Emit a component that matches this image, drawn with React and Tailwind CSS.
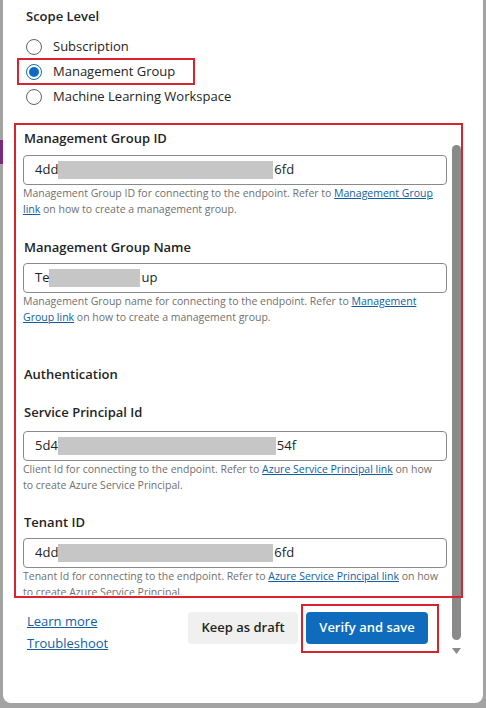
import React from "react";

const font = { fontFamily: '"Open Sans", "Noto Sans", sans-serif' };

function Radio({ label, checked }) {
  return (
    <div className="flex items-center gap-[11px] h-[25px]">
      {checked ? (
        <span className="w-[16px] h-[16px] rounded-full border border-[#0f6cbd] flex items-center justify-center">
          <span className="w-[10px] h-[10px] rounded-full bg-[#0f6cbd]" />
        </span>
      ) : (
        <span className="w-[16px] h-[16px] rounded-full border border-[#616161]" />
      )}
      <span className="text-[13px] text-[#242424]">{label}</span>
    </div>
  );
}

function Redacted({ pre, w, post }) {
  return (
    <div className="flex items-center h-full pl-[11px] text-[13px] text-[#242424]">
      <span>{pre}</span>
      <span className="h-[18px] bg-[#c6c6c6]" style={{ width: w }} />
      <span className="ml-[1px]">{post}</span>
    </div>
  );
}

function Field({ label, pre, w, post, children, mt, gap }) {
  return (
    <div className={mt}>
      <div className="text-[13px] font-semibold text-[#242424] leading-[20px] pl-[1px]">{label}</div>
      <div className={"h-[30px] w-[424px] border border-[#8a8a8a] rounded-[4px] " + gap}>
        <Redacted pre={pre} w={w} post={post} />
      </div>
      <div className="text-[10.5px] leading-[16px] text-[#707070] w-[420px]">{children}</div>
    </div>
  );
}

const A = ({ children }) => (
  <span className="text-[#115ea3] underline">{children}</span>
);

export default function App() {
  return (
    <div className="w-[486px] h-[708px] bg-[#a3a3a3] relative overflow-hidden" style={font}>
      <div className="absolute left-0 top-[140px] w-[3px] h-[24px] bg-[#7a2a80]" />
      <div className="ml-[3px] w-[480px] h-[703px] bg-white rounded-br-[8px] rounded-bl-[8px] flex relative">
        <div className="w-[448px] flex flex-col">
          <div className="h-[595px] overflow-hidden pl-[20px]">
            <div className="pt-[6px] text-[13px] font-semibold text-[#242424] leading-[20px] pl-[3px]">Scope Level</div>
            <div className="mt-[8px] pl-[3px] flex flex-col items-start">
              <Radio label="Subscription" />
              <div className="-ml-[9px] -my-[1px] px-[7px] border-2 border-[#d9232e] h-[27px] flex items-center w-[178px]">
                <Radio label="Management Group" checked />
              </div>
              <Radio label="Machine Learning Workspace" />
            </div>
            <div className="mt-[19px]">
              <Field gap="mt-[7px]" label="Management Group ID" pre="4dd" w={215} post="6fd">
                Management Group ID for connecting to the endpoint. Refer to <A>Management Group link</A> on how to create a management group.
              </Field>
              <Field mt="mt-[20px]" gap="mt-[6px]" label="Management Group Name" pre="Te" w={91} post="up">
                Management Group name for connecting to the endpoint. Refer to <A>Management Group link</A> on how to create a management group.
              </Field>
              <div className="mt-[39px] text-[13px] font-semibold text-[#242424] leading-[20px] pl-[1px]">Authentication</div>
              <Field mt="mt-[18px]" gap="mt-[9px]" label="Service Principal Id" pre="5d4" w={218} post="54f">
                Client Id for connecting to the endpoint. Refer to <A>Azure Service Principal link</A> on how to create Azure Service Principal.
              </Field>
              <Field mt="mt-[19px]" gap="mt-[6px]" label="Tenant ID" pre="4dd" w={215} post="6fd">
                Tenant Id for connecting to the endpoint. Refer to <A>Azure Service Principal link</A> on how to create Azure Service Principal.
              </Field>
            </div>
          </div>
          <div className="flex items-start pl-[24px] pt-[15px]">
            <div className="flex flex-col text-[13px] leading-[22px] text-[#115ea3] underline">
              <span>Learn more</span>
              <span>Troubleshoot</span>
            </div>
            <div className="ml-auto flex items-start gap-[3px] mr-[12px] -mt-[6px]">
              <button className="mt-[8px] h-[32px] w-[110px] bg-[#f0f0f0] rounded-[4px] text-[13px] font-semibold text-[#242424]">Keep as draft</button>
              <div className="border-2 border-[#d9232e] pl-[3px] pr-[9px] pt-[6px] pb-[7px]">
                <button className="h-[32px] w-[122px] bg-[#0f6cbd] rounded-[4px] text-[13px] font-semibold text-white">Verify and save</button>
              </div>
            </div>
          </div>
        </div>
        <div className="w-[11px] flex flex-col items-center pt-[145px]">
          <div className="w-[9px] h-[495px] bg-[#8a8a8a] rounded-full" />
          <svg width="9" height="6" viewBox="0 0 9 6" className="mt-[8px]">
            <path d="M0 0 H9 L4.5 6 Z" fill="#8a8a8a" />
          </svg>
        </div>
        <div className="absolute left-[11px] top-[123px] w-[449px] h-[475px] border-2 border-[#d9232e] pointer-events-none" />
      </div>
    </div>
  );
}
